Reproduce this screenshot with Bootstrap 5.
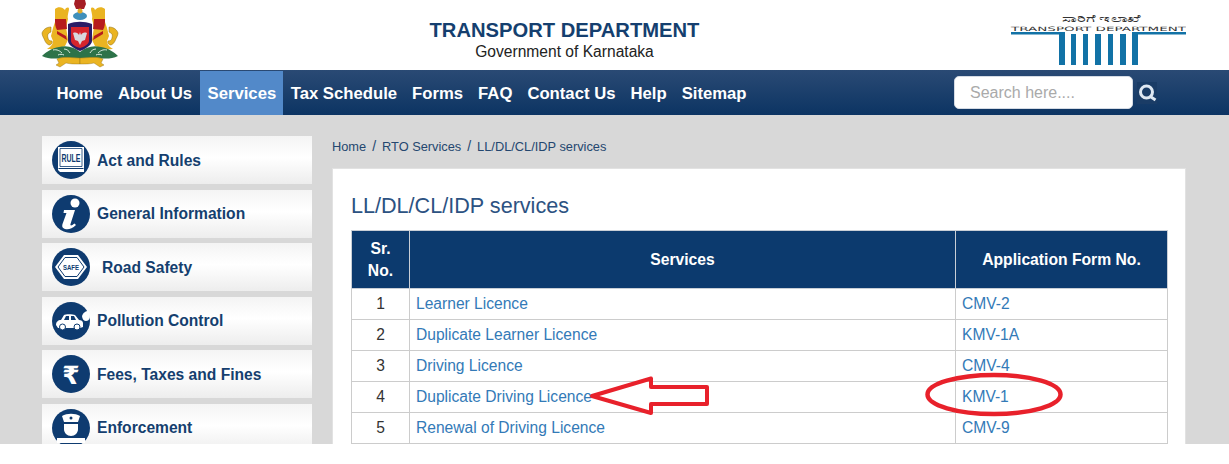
<!DOCTYPE html>
<html lang="en"><head><meta charset="utf-8"><title>Transport Department</title>
<link href="https://cdn.jsdelivr.net/npm/bootstrap@5.3.0/dist/css/bootstrap.min.css" rel="stylesheet">
<style>
html,body{height:464px;overflow:hidden}
body{font-family:"Liberation Sans",Arial,sans-serif;background:#fff;position:relative;color:#333}
.top-head{height:70px;background:#fff;padding:0 43px 0 41px}
.emblem{width:78px;height:70px;display:block}
.dept{flex:1;text-align:center;padding-top:18px}
.dept-name{font-size:20.2px;line-height:24px;font-weight:700;color:#153f6f}
.dept-sub{font-size:15.6px;line-height:20px;color:#222}
.rto-logo{width:176px;height:70px;display:block}
.main-nav{height:45px;padding:0 0 0 49px;background:linear-gradient(#2a4a74,#0c3463);align-items:stretch}
.main-nav a{color:#fff;font-size:16.7px;font-weight:700;padding:3px 7.5px 0;display:flex;align-items:center;text-decoration:none}
.main-nav a.on{background:#5289c9;margin-top:1px;padding-top:2px;padding-left:8px;padding-right:7px}
.search-wrap{margin-left:auto;margin-right:72px;align-items:center}
.search-box{width:179px;height:33px;border-radius:5px;background:#fff;border:1px solid #d5dbe4;padding:1px 15px 0;font-size:16px;color:#aaa;line-height:30px}
.search-btn{width:20px;height:22px;margin-left:4px;display:block;background:#1a3c66}
.page-body{height:329px;overflow:hidden;background:#d8d8d8;padding:21px 43px 0 42px;gap:20px;align-items:flex-start}
.side{width:270px;flex:none;display:flex;flex-direction:column;gap:5.5px}
.side-item{height:48px;flex:none;background:linear-gradient(#f4f4f4,#fff 45%,#ededed);display:flex;align-items:center;padding-left:10px;color:#153f6f;font-weight:700;font-size:15.6px;text-decoration:none}
.side-item svg{width:38px;height:38px;margin-right:7px;flex:none}
.side-item.shift svg{margin-right:12px}
.side-item span{padding-top:1px}
.crumbs{font-size:12.8px;line-height:20px;color:#24476f;padding-top:1px;margin-bottom:11px;display:flex;margin-left:-1px}
.crumbs span:first-child{margin-left:1px}
.crumbs i{font-style:normal;font-size:14px;padding:0 6px;line-height:18px}
.content-col{width:854px;flex:none}
.panel{background:#fff;border:1px solid #e2e2e2;border-bottom:0;padding:19px 18px 0;height:320px}
.panel h2{font-size:21.6px;line-height:36px;font-weight:400;color:#2c5282;margin:0 0 6px}
.svc{width:816px;table-layout:fixed;border-collapse:collapse;margin:0}
.svc th{background:#0c3a6e;color:#fff;text-align:center;font-size:15.7px;line-height:22px;padding:0;height:58px;border:1px solid #c9ced6;font-weight:700}
.svc td{height:31px;padding:0 6px;border:1px solid #ccc;line-height:20px;color:#333;font-size:15.6px}
.svc td a{color:#337ab7;text-decoration:none}
.svc td.n{text-align:center}
.svc col.c1{width:58px}.svc col.c2{width:546px}.svc col.c3{width:212px}
.marks{position:absolute;left:0;top:0;width:1229px;height:464px;pointer-events:none}
</style></head><body>
<header class="top-head d-flex">
<svg class="emblem" viewBox="0 0 78 70" aria-hidden="true">
<defs><g id="half">
<path d="M14 9c3-3 8-2 10 1 1-3 4-3 4-1s-2 7-1 10l-2 8 2 13-3 6-9 3c-4 1-7 0-9 0 3-2 6-4 6-8l-2-5 2-8 2-6z" fill="#eab422"/>
<path d="M14 19h11l1 10-10 1c-2-3-2-7-2-11z" fill="#b71c1c"/>
<path d="M16 31l9 5 1 4-10-6z" fill="#b71c1c"/>
<path d="M10 27c-5 0-8 3-9 6 0 3 2 5 3 8 1 2 2 3 4 4 2 0 4-2 3-4-2 0-4-1-4-3-1-3 0-5 3-6z" fill="#eab422" stroke="#8a6a12" stroke-width=".5"/>
<path d="M1 56c4-4 10-8 17-9 8-2 15 0 21 5v8c-7 0-13-1-19-2-6 1-13 1-19-2z" fill="#2d7349"/>
<path d="M12 50c4-1 7 1 9 3m2-4c3 0 5 2 6 4m-12 2c2-1 4-1 6 0" stroke="#dfeee4" stroke-width="1" fill="none"/>
<path d="M16 59c7-3 14-1 23-1v6c-6 0-10 0-14-1l-6 4-4-2 3-2z" fill="#eab422" stroke="#8a6a12" stroke-width=".4"/>
</g></defs>
<use href="#half"/><use href="#half" transform="matrix(-1 0 0 1 78 0)"/>
<path d="M34 0h10l1 4-2 5h-8l-2-5z" fill="#a51d24"/>
<ellipse cx="39" cy="16" rx="7" ry="4" fill="#3f8fbb"/><circle cx="39" cy="11" r="2.500" fill="#e0a92a"/>
<path d="M27 24c8-3 16-3 24 0v17c0 4-7 8-12 10-5-2-12-6-12-10z" fill="#2b1c66"/>
<path d="M30 27h18v14c0 3-5 6-9 7-4-1-9-4-9-7z" fill="#d5242c"/>
<path d="M32 33c3-1 5 0 6 2l1-3 1 3c1-2 3-3 6-2l-2 7-3 1-2 4-2-4-3-1z" fill="#d8d8de"/>
</svg>
<div class="dept"><div class="dept-name">TRANSPORT DEPARTMENT</div><div class="dept-sub">Government of Karnataka</div></div>
<svg class="rto-logo" viewBox="0 0 176 70" aria-hidden="true">
<text x="91" y="22" text-anchor="middle" font-family="Noto Sans,Liberation Sans,sans-serif" font-size="9" fill="#333" textLength="78" lengthAdjust="spacingAndGlyphs">ಸಾರಿಗೆ ಇಲಾಖೆ</text>
<text x="1" y="31" font-family="DejaVu Sans,sans-serif" font-size="6" fill="#333" textLength="175" lengthAdjust="spacingAndGlyphs">TRANSPORT DEPARTMENT</text>
<g fill="#1272a6"><rect x="1" y="32" width="54" height="2.500"/><rect x="122" y="32" width="54" height="2.500"/>
<rect x="49" y="33" width="6" height="32"/><rect x="61" y="34" width="5" height="31"/><rect x="73" y="34" width="5" height="31"/><rect x="85" y="34" width="6" height="31"/><rect x="98" y="34" width="5" height="31"/><rect x="110" y="34" width="6" height="31"/><rect x="122" y="33" width="6" height="32"/></g>
</svg>
</header>
<nav class="main-nav d-flex">
<a href="#">Home</a><a href="#">About Us</a><a href="#" class="on">Services</a><a href="#">Tax Schedule</a><a href="#">Forms</a><a href="#">FAQ</a><a href="#">Contact Us</a><a href="#">Help</a><a href="#">Sitemap</a>
<div class="search-wrap d-flex"><div class="search-box">Search here....</div>
<svg class="search-btn" viewBox="0 0 20 22" aria-hidden="true"><circle cx="9.500" cy="10" r="6" fill="none" stroke="#dfe8f2" stroke-width="3"/><path d="M12.500 14l6 4" stroke="#dfe8f2" stroke-width="3"/></svg></div>
</nav>
<div class="page-body d-flex">
<aside class="side">
<a class="side-item" href="#"><svg viewBox="0 0 38 38"><circle cx="19" cy="19" r="19" fill="#0e3b70"/><path d="M6 6h26v25H8l-2-2z" fill="#fff"/><path d="M6.500 27.500h25" stroke="#0e3b70"/><path d="M8 7.500h22v18H8z" fill="#fff" stroke="#0e3b70" stroke-width=".8"/><text x="19" y="21" text-anchor="middle" font-family="Liberation Sans,sans-serif" font-size="11" fill="#0e3b70" textLength="19" lengthAdjust="spacingAndGlyphs">RULE</text></svg><span>Act and Rules</span></a>
<a class="side-item" href="#"><svg viewBox="0 0 38 38"><circle cx="19" cy="19" r="19" fill="#0e3b70"/><circle cx="23" cy="8" r="4.500" fill="#fff"/><path d="M12 15h11l-4.500 14c-.5 2 1 2 4-.5l1.500 1.500c-4 4-8 5-11 4-3-1-3-3-2.500-5l4-11h-3z" fill="#fff"/></svg><span>General Information</span></a>
<a class="side-item shift" href="#"><svg viewBox="0 0 38 38"><circle cx="19" cy="19" r="19" fill="#0e3b70"/><path d="M12 7h14l9 12-9 12H12L3 19z" fill="#fff"/><path d="M13 9.500h12l7 9.500-7 9.500H13L6 19z" fill="none" stroke="#0e3b70"/><text x="19" y="22" text-anchor="middle" font-family="Liberation Sans,sans-serif" font-size="8" fill="#0e3b70" textLength="16" lengthAdjust="spacingAndGlyphs">SAFE</text></svg><span>Road Safety</span></a>
<a class="side-item" href="#"><svg viewBox="0 0 38 38"><circle cx="19" cy="19" r="19" fill="#0e3b70"/><path d="M4 23c0-3 2-5 5-5l3-5c1-1 9-1 11 0l4 5c2 0 4 1 4 3v4l-3 1H6z" fill="#fff"/><path d="M14 14h3v4h-5zM19 14h3l2 4h-5z" fill="#0e3b70"/><circle cx="10.500" cy="25" r="3" fill="#fff" stroke="#0e3b70"/><circle cx="25" cy="25" r="3" fill="#fff" stroke="#0e3b70"/><path d="M30 14c1-3 3-5 7-5l1 6c-1 3-2 4-4 4s-4-2-4-5z" fill="#fff"/></svg><span>Pollution Control</span></a>
<a class="side-item" href="#"><svg viewBox="0 0 38 38"><circle cx="19" cy="19" r="19" fill="#0e3b70"/><text x="19" y="29" text-anchor="middle" font-family="DejaVu Sans,sans-serif" font-size="25" font-weight="700" fill="#fff">₹</text></svg><span>Fees, Taxes and Fines</span></a>
<a class="side-item" href="#"><svg viewBox="0 0 38 38"><circle cx="19" cy="19" r="19" fill="#0e3b70"/><path d="M10 7c5-3 13-3 18 0l-2 6H12z" fill="#fff"/><path d="M12 15h14v5c0 4-3 7-7 7s-7-3-7-7z" fill="#fff"/><path d="M5 29h28v5H5z" fill="#fff"/><circle cx="19" cy="9" r="1.500" fill="#0e3b70"/></svg><span>Enforcement</span></a>
</aside>
<main class="content-col">
<div class="crumbs"><span>Home</span><i>/</i><span>RTO Services</span><i>/</i><span>LL/DL/CL/IDP services</span></div>
<section class="panel">
<h2>LL/DL/CL/IDP services</h2>
<table class="svc">
<colgroup><col class="c1"><col class="c2"><col class="c3"></colgroup>
<thead><tr><th>Sr.<br>No.</th><th>Services</th><th>Application Form No.</th></tr></thead>
<tbody>
<tr><td class="n">1</td><td><a href="#">Learner Licence</a></td><td><a href="#">CMV-2</a></td></tr>
<tr><td class="n">2</td><td><a href="#">Duplicate Learner Licence</a></td><td><a href="#">KMV-1A</a></td></tr>
<tr><td class="n">3</td><td><a href="#">Driving Licence</a></td><td><a href="#">CMV-4</a></td></tr>
<tr><td class="n">4</td><td><a href="#">Duplicate Driving Licence</a></td><td><a href="#">KMV-1</a></td></tr>
<tr><td class="n">5</td><td><a href="#">Renewal of Driving Licence</a></td><td><a href="#">CMV-9</a></td></tr>
</tbody></table>
</section>
</main>
</div>
<svg class="marks" viewBox="0 0 1229 464" aria-hidden="true">
<path d="M592 396l59-17.500v8.500h56v17h-56v9z" fill="none" stroke="#e8212b" stroke-width="4" stroke-linejoin="round"/>
<ellipse cx="994" cy="394.500" rx="66.500" ry="19.500" fill="none" stroke="#e8212b" stroke-width="4.500"/>
</svg>
</body></html>
